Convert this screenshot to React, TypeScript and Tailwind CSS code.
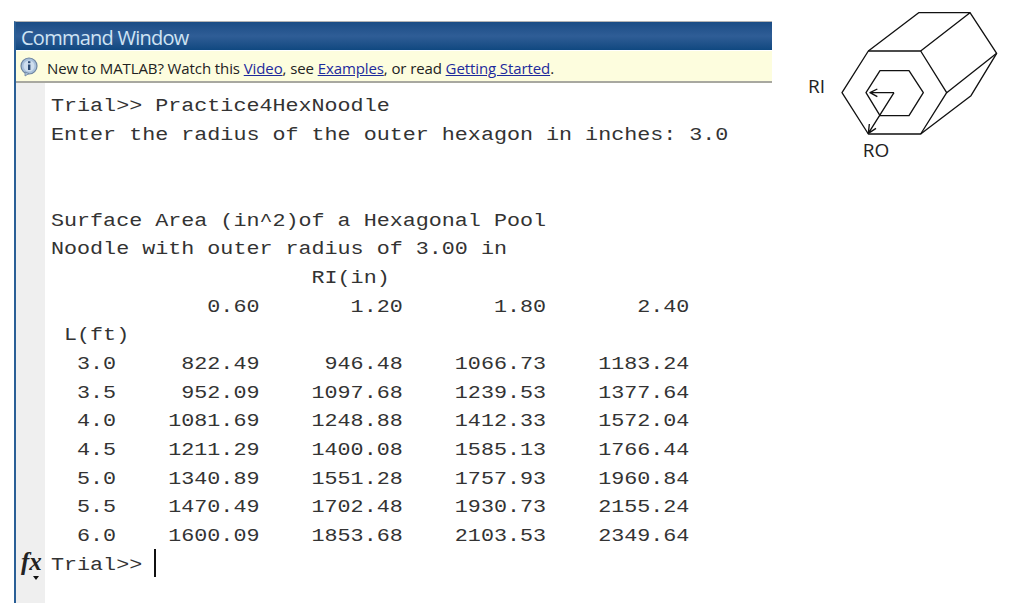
const mono = "font-['Liberation_Mono',monospace]";

const rows = [
  ["3.0", "822.49", "946.48", "1066.73", "1183.24"],
  ["3.5", "952.09", "1097.68", "1239.53", "1377.64"],
  ["4.0", "1081.69", "1248.88", "1412.33", "1572.04"],
  ["4.5", "1211.29", "1400.08", "1585.13", "1766.44"],
  ["5.0", "1340.89", "1551.28", "1757.93", "1960.84"],
  ["5.5", "1470.49", "1702.48", "1930.73", "2155.24"],
  ["6.0", "1600.09", "1853.68", "2103.53", "2349.64"],
];

const header =
  "Trial>> Practice4HexNoodle\nEnter the radius of the outer hexagon in inches: 3.0\n\n\nSurface Area (in^2)of a Hexagonal Pool\nNoodle with outer radius of 3.00 in\n" +
  " ".repeat(20) + "RI(in)\n" +
  " ".repeat(12) + "0.60" + " ".repeat(7) + "1.20" + " ".repeat(7) + "1.80" + " ".repeat(7) + "2.40\n" +
  " L(ft)\n";

const table = rows
  .map((r) => "  " + r[0] + r[1].padStart(11) + r[2].padStart(11) + r[3].padStart(11) + r[4].padStart(11))
  .join("\n");

function InfoIcon() {
  return (
    <svg width="21" height="20" viewBox="0 0 21 20" className="shrink-0 -mt-[3px]">
      <circle cx="10" cy="9" r="8" fill="#a9c1dc" stroke="#6d84a0" strokeWidth="1.2" />
      <circle cx="10" cy="9" r="5.5" fill="#cfdeee" />
      <path d="M6 15 L6 19 L10 16.5 Z" fill="#a9c1dc" stroke="#6d84a0" strokeWidth="0.8" />
      <rect x="9" y="7.5" width="2.4" height="5.5" fill="#2c4a73" />
      <rect x="9" y="4.2" width="2.4" height="2" fill="#2c4a73" />
    </svg>
  );
}

function Diagram() {
  return (
    <svg width="234" height="170" viewBox="0 0 702 510" className="shrink-0 ml-[18px]">
      <g fill="none" stroke="#111" strokeWidth="4" strokeLinejoin="round">
        <path d="M235 153 L392 153 L470 278 L392 402 L235 402 L156 278 Z" />
        <path d="M235 153 L386 38 L540 38 L392 153" />
        <path d="M540 38 L620 160 L470 278" />
        <path d="M620 160 L543 287 L392 402" />
        <path d="M270 212 L357 212 L400 278 L357 347 L270 347 L228 278 Z" />
        <path d="M312 278 L240 278 M262 267 L240 278 L262 290" />
        <path d="M312 278 L235 400 M238 372 L235 400 L258 385" />
      </g>
      <text x="54" y="280" fontSize="57" fill="#222" className="font-['Open_Sans',sans-serif]">RI</text>
      <text x="218" y="470" fontSize="57" fill="#222" className="font-['Open_Sans',sans-serif]">RO</text>
    </svg>
  );
}

export default function App() {
  return (
    <div className="w-[1024px] h-[612px] bg-white flex items-start overflow-hidden">
      {/* Command window */}
      <div className="ml-[14px] mt-[21px] w-[758px] h-[582px] flex flex-col border-t border-[#b4b4b4] border-l-[2px] border-l-[#2a5f96]">
        <div className="h-[28px] pt-[3px] bg-gradient-to-b from-[#1a4c85] via-[#2f5d96] to-[#0f4880] flex items-center pl-[5px] text-[20px] text-[#cfe4f4] font-['Open_Sans',sans-serif] tracking-[-0.75px]">
          Command Window
        </div>
        <div className="h-[32px] mt-px pt-[5px] bg-[#fdfdde] border-b-2 border-[#a8a8a0] flex items-center pl-[3px] gap-[7px] text-[15px] text-[#222] font-['Open_Sans',sans-serif] tracking-[-0.1px]">
          <InfoIcon />
          <span>
            New to MATLAB? Watch this <span className="text-[#1d2a9c] underline">Video</span>, see{" "}
            <span className="text-[#1d2a9c] underline">Examples</span>, or read{" "}
            <span className="text-[#1d2a9c] underline">Getting Started</span>.
          </span>
        </div>
        <div className="flex-1 flex min-h-0">
          <div className="w-[29px] bg-[#efefef] relative shrink-0">
            <span className="absolute left-[5px] top-[464px] font-['Liberation_Serif',serif] italic font-bold text-[25px] leading-[30px] text-[#222]">
              fx
            </span>
            <span className="absolute left-[17px] top-[493px] w-0 h-0 border-x-[3px] border-x-transparent border-t-[4px] border-t-[#111]" />
          </div>
          <div className="flex-1 pl-[5.5px] pt-[9px] relative">
            <pre className={`${mono} text-[18px] leading-[28.67px] text-[#333] origin-top-left scale-x-[1.206]`}>
              {header}
              {table}
              {"\nTrial>> "}
            </pre>
            <span className="absolute left-[109px] top-[466px] w-[2px] h-[28px] bg-[#111]" />
          </div>
        </div>
      </div>
      <Diagram />
    </div>
  );
}
